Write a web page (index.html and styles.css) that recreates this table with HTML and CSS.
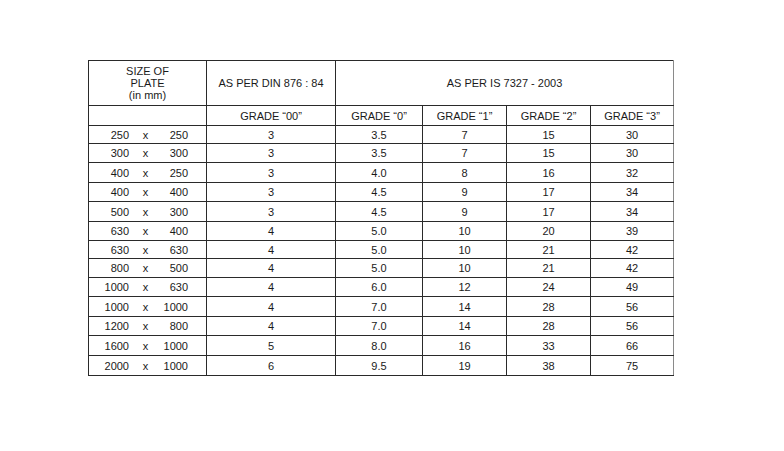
FILE: index.html
```html
<!DOCTYPE html>
<html>
<head>
<meta charset="utf-8">
<link rel="stylesheet" href="styles.css">
</head>
<body>
<div class="page">
<table class="grid">
  <colgroup>
    <col class="c1"><col class="c2"><col class="c3"><col class="c4"><col class="c5"><col class="c6">
  </colgroup>
  <tr class="h1">
    <td class="size-head">SIZE OF<br>PLATE<br>(in mm)</td>
    <td>AS PER DIN 876 : 84</td>
    <td colspan="4">AS PER IS 7327 - 2003</td>
  </tr>
  <tr class="h2">
    <td></td>
    <td>GRADE “00”</td>
    <td>GRADE “0”</td>
    <td>GRADE “1”</td>
    <td>GRADE “2”</td>
    <td>GRADE “3”</td>
  </tr>
  <tr class="s"><td><div class="dim"><span class="a">250</span><span class="x">x</span><span class="b">250</span></div></td><td>3</td><td>3.5</td><td>7</td><td>15</td><td>30</td></tr>
  <tr><td><div class="dim"><span class="a">300</span><span class="x">x</span><span class="b">300</span></div></td><td>3</td><td>3.5</td><td>7</td><td>15</td><td>30</td></tr>
  <tr class="t"><td><div class="dim"><span class="a">400</span><span class="x">x</span><span class="b">250</span></div></td><td>3</td><td>4.0</td><td>8</td><td>16</td><td>32</td></tr>
  <tr><td><div class="dim"><span class="a">400</span><span class="x">x</span><span class="b">400</span></div></td><td>3</td><td>4.5</td><td>9</td><td>17</td><td>34</td></tr>
  <tr class="t"><td><div class="dim"><span class="a">500</span><span class="x">x</span><span class="b">300</span></div></td><td>3</td><td>4.5</td><td>9</td><td>17</td><td>34</td></tr>
  <tr><td><div class="dim"><span class="a">630</span><span class="x">x</span><span class="b">400</span></div></td><td>4</td><td>5.0</td><td>10</td><td>20</td><td>39</td></tr>
  <tr class="s"><td><div class="dim"><span class="a">630</span><span class="x">x</span><span class="b">630</span></div></td><td>4</td><td>5.0</td><td>10</td><td>21</td><td>42</td></tr>
  <tr><td><div class="dim"><span class="a">800</span><span class="x">x</span><span class="b">500</span></div></td><td>4</td><td>5.0</td><td>10</td><td>21</td><td>42</td></tr>
  <tr><td><div class="dim"><span class="a">1000</span><span class="x">x</span><span class="b">630</span></div></td><td>4</td><td>6.0</td><td>12</td><td>24</td><td>49</td></tr>
  <tr class="t"><td><div class="dim"><span class="a">1000</span><span class="x">x</span><span class="b">1000</span></div></td><td>4</td><td>7.0</td><td>14</td><td>28</td><td>56</td></tr>
  <tr><td><div class="dim"><span class="a">1200</span><span class="x">x</span><span class="b">800</span></div></td><td>4</td><td>7.0</td><td>14</td><td>28</td><td>56</td></tr>
  <tr class="t"><td><div class="dim"><span class="a">1600</span><span class="x">x</span><span class="b">1000</span></div></td><td>5</td><td>8.0</td><td>16</td><td>33</td><td>66</td></tr>
  <tr class="t"><td><div class="dim"><span class="a">2000</span><span class="x">x</span><span class="b">1000</span></div></td><td>6</td><td>9.5</td><td>19</td><td>38</td><td>75</td></tr>
</table>
</div>
</body>
</html>
```

FILE: styles.css
```css
html, body {
  margin: 0;
  padding: 0;
  background: #ffffff;
}

.page {
  padding: 60px 0 0 88px;
}

.grid {
  border-collapse: collapse;
  table-layout: fixed;
  width: 585px;
  font-family: "Liberation Sans", Arial, sans-serif;
  font-size: 11px;
  color: #1a1a1a;
}

.c1 { width: 118px; }
.c2 { width: 129px; }
.c3 { width: 87px; }
.c4 { width: 84px; }
.c5 { width: 84px; }
.c6 { width: 83px; }

.grid td {
  border: 1px solid #2a2a2a;
  padding: 0;
  text-align: center;
  vertical-align: middle;
  line-height: 12px;
  height: 18px;
}

.grid td:last-child {
  border-right-color: #8a8a8a;
}

.grid tr.h1 td {
  height: 44px;
}

.grid tr.h2 td {
  height: 19px;
}

.grid tr.s td { height: 17px; }
.grid tr.t td { height: 19px; }

.size-head {
  line-height: 12.5px;
}

.dim {
  display: flex;
  text-align: right;
}

.dim .a {
  width: 40px;
  text-align: right;
}

.dim .x {
  width: 33px;
  text-align: center;
}

.dim .b {
  width: 26px;
  text-align: right;
}
```
